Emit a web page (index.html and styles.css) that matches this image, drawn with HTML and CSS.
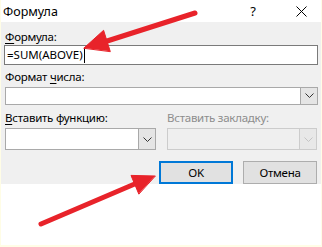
FILE: index.html
```html
<!DOCTYPE html>
<html>
<head>
<meta charset="utf-8">
<link rel="stylesheet" href="styles.css">
</head>
<body>
<div class="frame">
  <div class="titlebar">
    <span class="title">Формула</span>
    <span class="help">?</span>
    <span class="close"><svg width="11" height="11" viewBox="0 0 11 11"><path d="M0.5 0.5L10.5 10.5M10.5 0.5L0.5 10.5" stroke="#000" stroke-width="1" fill="none"/></svg></span>
  </div>
  <div class="body">
    <div class="label l1"><u>Ф</u>ормула:</div>
    <div class="input">=SUM(ABOVE)<span class="caret"></span></div>
    <div class="label l2">Формат <u>ч</u>исла:</div>
    <div class="select s2">
      <div class="field"></div>
      <div class="drop"><svg width="9" height="5" viewBox="0 0 9 5"><path d="M0.5 0.5L4.5 4.5L8.5 0.5" stroke="#333" stroke-width="1" fill="none"/></svg></div>
    </div>
    <div class="row">
      <div class="col">
        <div class="label l3"><u>В</u>ставить функцию:</div>
        <div class="select s3">
          <div class="field"></div>
          <div class="drop"><svg width="9" height="5" viewBox="0 0 9 5"><path d="M0.5 0.5L4.5 4.5L8.5 0.5" stroke="#333" stroke-width="1" fill="none"/></svg></div>
        </div>
      </div>
      <div class="col disabled">
        <div class="label l3">Вставить закладку:</div>
        <div class="select s3">
          <div class="field"></div>
          <div class="drop"><svg width="9" height="5" viewBox="0 0 9 5"><path d="M0.5 0.5L4.5 4.5L8.5 0.5" stroke="#c4c4c4" stroke-width="1" fill="none"/></svg></div>
        </div>
      </div>
    </div>
    <div class="buttons">
      <div class="button ok">OK</div>
      <div class="button">Отмена</div>
    </div>
  </div>
  <div class="bottom"></div>
</div>
<svg class="arrows" width="322" height="247" viewBox="0 0 322 247">
  <g fill="#e8232a" stroke="#e8232a" stroke-linecap="round" stroke-linejoin="round">
    <line x1="195" y1="13" x2="104" y2="42" stroke-width="5"/>
    <polygon points="84,48 103.6,30.3 110.2,51.3" stroke-width="1"/>
    <line x1="41" y1="224" x2="137" y2="183" stroke-width="5"/>
    <polygon points="155,176 131,175.4 138.7,193.8" stroke-width="1"/>
  </g>
</svg>
</body>
</html>
```

FILE: styles.css
```css
html, body {
  margin: 0;
  padding: 0;
}
body {
  width: 322px;
  height: 247px;
  background: #fffde6;
  font-family: "Noto Sans", "Liberation Sans", sans-serif;
  font-size: 11.5px;
  letter-spacing: -0.25px;
  color: #000;
  position: relative;
  overflow: hidden;
}
.frame {
  margin: 0 1px 0 1px;
  width: 320px;
  height: 245px;
  background: #ffffff;
  display: flex;
  flex-direction: column;
}
.titlebar {
  height: 22px;
  display: flex;
  align-items: center;
  background: #ffffff;
  padding-left: 2px;
}
.title {
  font-size: 12.5px;
  letter-spacing: 0;
  flex: 1;
}
.help {
  font-size: 13px;
  width: 14px;
  margin-right: 36px;
  text-align: center;
}
.close {
  width: 11px;
  height: 11px;
  margin-right: 14px;
  display: flex;
}
.body {
  background: #f0f0f0;
  height: 162px;
  padding: 0 3px;
  display: flex;
  flex-direction: column;
}
.label {
  height: 16px;
  line-height: 16px;
  padding-left: 1px;
}
.label u {
  text-decoration-thickness: 1px;
  text-underline-offset: 2px;
}
.l1 { margin-top: 7px; }
.l2 { margin-top: 4px; }
.l3 { margin-top: 5px; }
.input {
  height: 22px;
  box-sizing: border-box;
  border: 1px solid #7a7a7a;
  background: #fff;
  display: flex;
  align-items: center;
  padding-left: 2px;
  letter-spacing: 0;
}
.caret {
  display: inline-block;
  width: 1px;
  height: 16px;
  background: #000;
  margin-left: 1px;
}
.select {
  display: flex;
  box-sizing: border-box;
  border: 1px solid #a9a9a9;
  background: #fff;
}
.s2 { height: 20px; margin-top: 2px; margin-left: 1px; }
.s3 { height: 22px; margin-top: 2px; margin-left: 1px; }
.field { flex: 1; }
.drop {
  width: 16px;
  background: #e5e5e5;
  border-left: 1px solid #a9a9a9;
  display: flex;
  align-items: center;
  justify-content: center;
}
.row {
  display: grid;
  grid-template-columns: 152px 151px;
  column-gap: 10px;
}
.disabled .label { color: #8d8d8d; }
.disabled .select {
  border-color: #cccccc;
  background: #efefef;
}
.disabled .drop {
  background: #e8e8e8;
  border-left: 1px solid #cccccc;
}
.buttons {
  display: flex;
  justify-content: flex-end;
  gap: 10px;
  margin-top: 11px;
  padding-right: 1px;
}
.button {
  width: 74px;
  height: 23px;
  box-sizing: border-box;
  border: 1px solid #adadad;
  background: #e1e1e1;
  display: flex;
  align-items: center;
  justify-content: center;
}
.button.ok {
  border: 2px solid #0078d7;
}
.bottom {
  flex: 1;
  background: #ffffff;
}
.arrows {
  position: absolute;
  left: 0;
  top: 0;
  pointer-events: none;
}
```
